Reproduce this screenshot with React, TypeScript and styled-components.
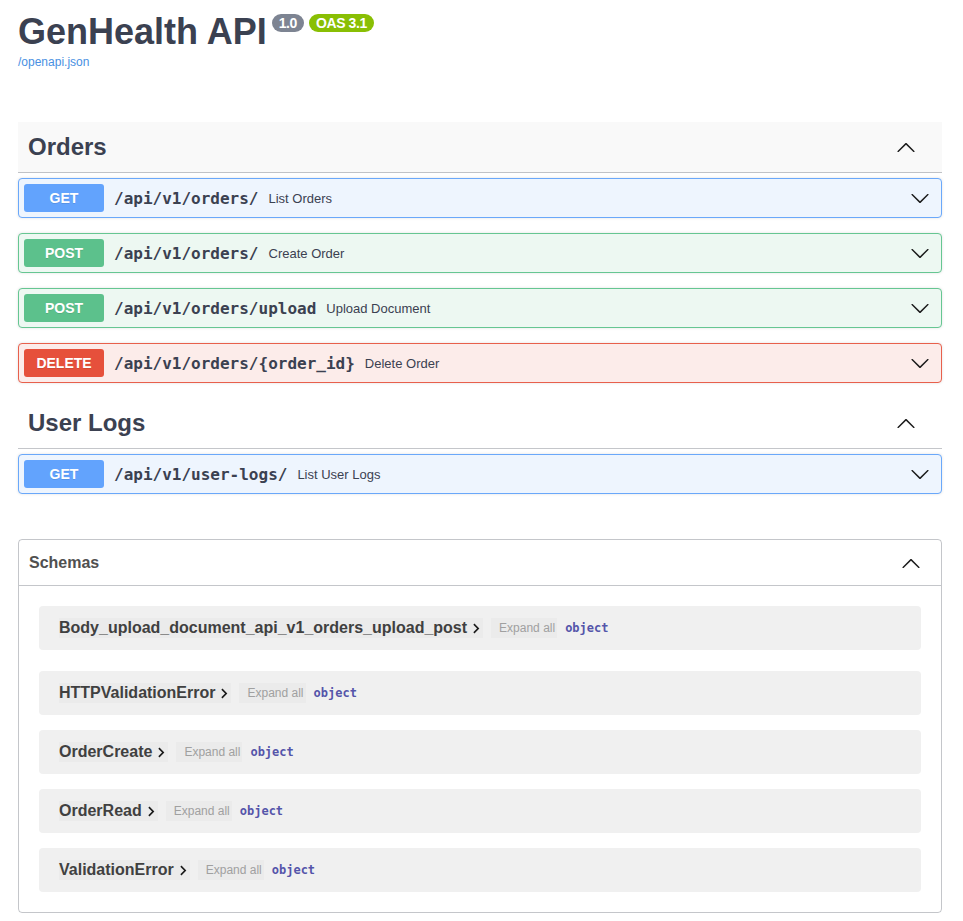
import * as React from "react";
import styled, { createGlobalStyle } from "styled-components";

const GlobalStyle = createGlobalStyle`
  body {
    margin: 0;
    background: #fff;
    font-family: "Liberation Sans", Arial, sans-serif;
    color: #3b4151;
  }
`;

const sans = `"Liberation Sans", Arial, sans-serif`;
const mono = `"DejaVu Sans Mono", "Liberation Mono", monospace`;

type Method = "get" | "post" | "delete";

const methodColors: Record<Method, { main: string; bg: string; border: string }> = {
  get: { main: "#62a3fd", bg: "#eef5fe", border: "#6aa8fa" },
  post: { main: "#5cc18c", bg: "#edf8f2", border: "#66c692" },
  delete: { main: "#e6503b", bg: "#fcecea", border: "#e8604c" }
};

const Page = styled.div`
  padding: 0 21px 40px 18px;
`;

const Info = styled.div`
  padding-top: 11px;
  margin-bottom: 53px;
`;

const TitleRow = styled.div`
  display: flex;
  align-items: flex-start;
`;

const Title = styled.h2`
  margin: 0;
  font-family: ${sans};
  font-size: 36px;
  line-height: 41px;
  font-weight: 700;
  color: #3b4151;
`;

const Badge = styled.span<{ $bg: string }>`
  margin: 3px 0 0 5px;
  padding: 2px 7px;
  border-radius: 57px;
  background: ${(p) => p.$bg};
  color: #fff;
  font-family: ${sans};
  font-size: 14px;
  line-height: 14px;
  font-weight: 700;
  letter-spacing: -0.4px;
`;

const SpecLink = styled.a`
  display: block;
  margin-top: 3px;
  font-family: ${sans};
  font-size: 12px;
  line-height: 14px;
  color: #4990e2;
  text-decoration: none;
`;

const TagSection = styled.section``;

const TagHeader = styled.h3<{ $hover?: boolean }>`
  display: flex;
  align-items: center;
  justify-content: space-between;
  box-sizing: border-box;
  height: 51px;
  margin: 0 0 5px;
  padding: 0 26px 0 10px;
  border-bottom: 1px solid rgba(59, 65, 81, 0.3);
  background: ${(p) => (p.$hover ? "#f9f9f9" : "transparent")};
  font-family: ${sans};
  font-size: 24px;
  font-weight: 700;
  color: #3b4151;
`;

const Opblock = styled.div<{ $method: Method }>`
  margin: 0 0 15px;
  border: 1px solid ${(p) => methodColors[p.$method].border};
  border-radius: 4px;
  background: ${(p) => methodColors[p.$method].bg};
  box-shadow: 0 0 3px rgba(0, 0, 0, 0.12);
`;

const Summary = styled.div`
  display: flex;
  align-items: center;
  padding: 5px;
`;

const MethodLabel = styled.span<{ $method: Method }>`
  min-width: 80px;
  padding: 6px 0;
  border-radius: 3px;
  background: ${(p) => methodColors[p.$method].main};
  color: #fff;
  text-align: center;
  font-family: ${sans};
  font-size: 14px;
  line-height: 16px;
  font-weight: 700;
  text-shadow: 0 1px 0 rgba(0, 0, 0, 0.1);
`;

const Path = styled.span`
  padding: 0 10px;
  font-family: ${mono};
  font-size: 16px;
  font-weight: 700;
  color: #3b4151;
`;

const Description = styled.span`
  flex: 1;
  font-family: ${sans};
  font-size: 13px;
  color: #3b4151;
`;

const ArrowIcon = styled.svg`
  flex: none;
  width: 20px;
  height: 20px;
  fill: #1b1b1b;
`;

const SummaryArrow = styled(ArrowIcon)`
  margin-right: 6px;
`;

const Models = styled.section`
  margin: 45px 0 0;
  border: 1px solid rgba(59, 65, 81, 0.3);
  border-radius: 4px;
`;

const ModelsHeader = styled.h4`
  display: flex;
  align-items: center;
  justify-content: space-between;
  box-sizing: border-box;
  height: 46px;
  margin: 0;
  padding: 0 20px 0 10px;
  border-bottom: 1px solid rgba(59, 65, 81, 0.3);
  font-family: ${sans};
  font-size: 16px;
  font-weight: 700;
  color: #505050;
`;

const ModelList = styled.div`
  padding: 20px 0 5px;
`;

const ModelContainer = styled.div`
  display: flex;
  align-items: center;
  height: 44px;
  margin: 0 20px 15px;
  padding: 0 20px;
  border-radius: 4px;
  background: #f0f0f0;

  &:first-child {
    margin-bottom: 21px;
  }
`;

const ModelName = styled.span`
  display: inline-flex;
  align-items: center;
  height: 20px;
  padding-right: 3px;
  background: #ebebeb;
  font-family: ${sans};
  font-size: 16px;
  font-weight: 700;
  color: #404040;
`;

const Toggle = styled.svg`
  width: 7px;
  height: 11px;
  margin-left: 6px;
  fill: #1b1b1b;
`;

const ExpandAll = styled.span`
  display: inline-flex;
  align-items: center;
  height: 20px;
  margin-left: 8px;
  padding: 0 2px 0 8px;
  background: #ebebeb;
  font-family: ${sans};
  font-size: 12px;
  color: #a0a0a0;
`;

const PropType = styled.span`
  margin-left: 8px;
  font-family: ${mono};
  font-size: 12px;
  font-weight: 700;
  color: #55a;
`;

const ArrowDown = () => (
  <SummaryArrow viewBox="0 0 20 20">
    <path d="M17.418 6.109c.272-.268.709-.268.979 0s.271.701 0 .969l-7.908 7.83c-.27.268-.707.268-.979 0l-7.908-7.83c-.27-.268-.27-.701 0-.969.271-.268.709-.268.979 0L10 13.25l7.418-7.141z" />
  </SummaryArrow>
);

const ArrowUp = () => (
  <ArrowIcon viewBox="0 0 20 20">
    <path d="M17.418 14.908c.272.268.709.268.979 0s.271-.701 0-.969l-7.908-7.83c-.27-.268-.707-.268-.979 0l-7.908 7.83c-.27.268-.27.701 0 .969.271.268.709.268.979 0L10 7.767l7.418 7.141z" />
  </ArrowIcon>
);

interface IOperation {
  method: Method;
  path: string;
  summary: string;
}

const tags: { name: string; hover?: boolean; ops: IOperation[] }[] = [
  {
    name: "Orders",
    hover: true,
    ops: [
      { method: "get", path: "/api/v1/orders/", summary: "List Orders" },
      { method: "post", path: "/api/v1/orders/", summary: "Create Order" },
      { method: "post", path: "/api/v1/orders/upload", summary: "Upload Document" },
      { method: "delete", path: "/api/v1/orders/{order_id}", summary: "Delete Order" }
    ]
  },
  {
    name: "User Logs",
    ops: [{ method: "get", path: "/api/v1/user-logs/", summary: "List User Logs" }]
  }
];

const schemas = [
  "Body_upload_document_api_v1_orders_upload_post",
  "HTTPValidationError",
  "OrderCreate",
  "OrderRead",
  "ValidationError"
];

const App: React.FC = () => (
  <Page>
    <GlobalStyle />
    <Info>
      <TitleRow>
        <Title>GenHealth API</Title>
        <Badge $bg="#7d8492">1.0</Badge>
        <Badge $bg="#89bf04">OAS 3.1</Badge>
      </TitleRow>
      <SpecLink href="#">/openapi.json</SpecLink>
    </Info>

    {tags.map((tag) => (
      <TagSection key={tag.name}>
        <TagHeader $hover={tag.hover}>
          <span>{tag.name}</span>
          <ArrowUp />
        </TagHeader>
        {tag.ops.map((op) => (
          <Opblock key={op.method + op.path} $method={op.method}>
            <Summary>
              <MethodLabel $method={op.method}>{op.method.toUpperCase()}</MethodLabel>
              <Path>{op.path}</Path>
              <Description>{op.summary}</Description>
              <ArrowDown />
            </Summary>
          </Opblock>
        ))}
      </TagSection>
    ))}

    <Models>
      <ModelsHeader>
        <span>Schemas</span>
        <ArrowUp />
      </ModelsHeader>
      <ModelList>
        {schemas.map((name) => (
          <ModelContainer key={name}>
            <ModelName>
              {name}
              <Toggle viewBox="8.2 5.6 8.6 12.8">
                <path d="M10 6 8.59 7.41 13.17 12l-4.58 4.59L10 18l6-6z" />
              </Toggle>
            </ModelName>
            <ExpandAll>Expand all</ExpandAll>
            <PropType>object</PropType>
          </ModelContainer>
        ))}
      </ModelList>
    </Models>
  </Page>
);

export default App;
